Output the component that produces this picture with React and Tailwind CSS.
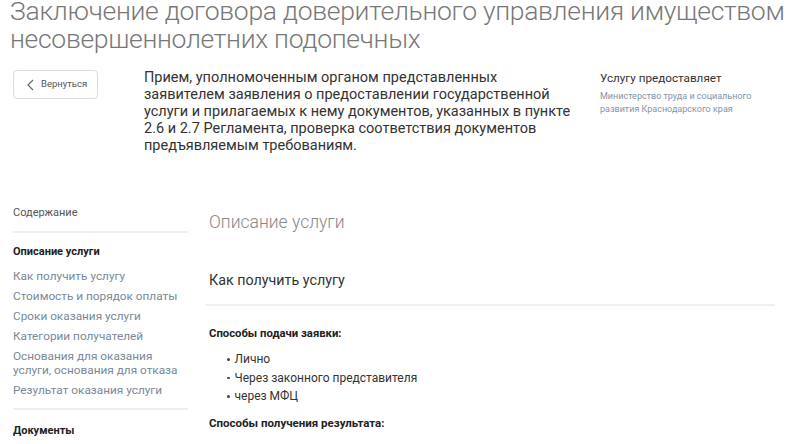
import React from 'react';

const tocLinks = [
  ['Как получить услугу'],
  ['Стоимость и порядок оплаты'],
  ['Сроки оказания услуги'],
  ['Категории получателей'],
  ['Основания для оказания', 'услуги, основания для отказа'],
  ['Результат оказания услуги'],
];

const submitWays = ['Лично', 'Через законного представителя', 'через МФЦ'];

const BackButton = () => (
  <button className="flex items-center h-[29px] w-[85px] border border-[#dcdcdc] rounded-[4px] bg-white pl-[13px] text-[9.5px] text-[#555]">
    <svg width="7" height="12" viewBox="0 0 7 12" className="mr-[7px]">
      <path d="M6 1 L1 6 L6 11" fill="none" stroke="#666" strokeWidth="1.2" />
    </svg>
    Вернуться
  </button>
);

export default function App() {
  return (
    <div className="w-[800px] h-[444px] overflow-hidden bg-white font-['Roboto',sans-serif]">
      <h1 className="-mt-[3px] pl-[10px] whitespace-nowrap text-[26.5px] leading-[28px] font-light text-[#787878] tracking-[-0.3px]">
        Заключение договора доверительного управления имуществом
        <br />
        несовершеннолетних подопечных
      </h1>

      <div className="flex mt-[17px]">
        <div className="w-[144px] pl-[13px]">
          <BackButton />
        </div>
        <p className="w-[440px] -mt-[1px] text-[14.5px] leading-[17px] text-[#333]">
          Прием, уполномоченным органом представленных
          <br />
          заявителем заявления о предоставлении государственной
          <br />
          услуги и прилагаемых к нему документов, указанных в пункте
          <br />
          2.6 и 2.7 Регламента, проверка соответствия документов
          <br />
          предъявляемым требованиям.
        </p>
        <div className="ml-[16px] mt-[1px]">
          <div className="text-[11.7px] leading-[14px] text-[#333]">Услугу предоставляет</div>
          <div className="mt-[5px] w-[170px] text-[9px] leading-[13px] text-[#8393a7]">
            Министерство труда и социального
            <br />
            развития Краснодарского края
          </div>
        </div>
      </div>

      <div className="flex mt-[50px]">
        <aside className="w-[188px] pl-[13px] shrink-0">
          <div className="text-[11px] leading-[14px] text-[#555] pt-[2px]">Содержание</div>
          <div className="mt-[11px] h-[2px] bg-[#efefef]" />
          <div className="mt-[12px] text-[11px] leading-[14px] font-bold text-[#222]">Описание услуги</div>
          <ul className="mt-[10px]">
            {tocLinks.map((lines) => (
              <li key={lines[0]} className="text-[11.8px] leading-[14px] text-[#7a8898] mb-[6px] whitespace-nowrap">
                {lines.map((l, i) => (
                  <div key={i}>{l}</div>
                ))}
              </li>
            ))}
          </ul>
          <div className="mt-[11px] h-[2px] bg-[#efefef]" />
          <div className="mt-[14px] text-[11px] leading-[14px] font-bold text-[#222]">Документы</div>
        </aside>

        <main className="ml-[17px] w-[570px]">
          <h2 className="pl-[4px] mt-[7px] text-[17.5px] leading-[22px] font-light text-[#888]">Описание услуги</h2>
          <h3 className="pl-[4px] mt-[38px] text-[14.3px] leading-[18px] text-[#333]">Как получить услугу</h3>
          <div className="mt-[15px] h-[2px] bg-[#f0f0f0]" />
          <div className="pl-[4px] mt-[20px] text-[11.3px] leading-[16px] font-bold text-[#222]">Способы подачи заявки:</div>
          <ul className="mt-[8px] pl-[22px]">
            {submitWays.map((w) => (
              <li key={w} className="flex items-center text-[12px] leading-[18.5px] text-[#333]">
                <span className="w-[2.5px] h-[2.5px] rounded-full bg-[#444] mr-[5px]" />
                {w}
              </li>
            ))}
          </ul>
          <div className="pl-[4px] mt-[9px] text-[11.5px] leading-[16px] font-bold text-[#222]">Способы получения результата:</div>
        </main>
      </div>
    </div>
  );
}
